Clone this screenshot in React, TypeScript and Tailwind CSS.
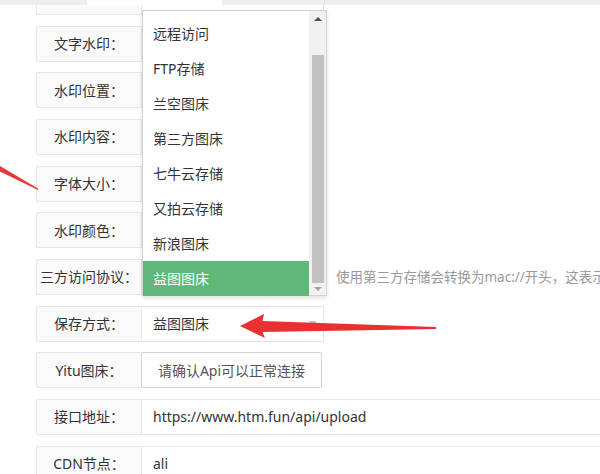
import React from "react";

const font = { fontFamily: '"Noto Sans", "Noto Sans CJK SC", sans-serif' };

function Label({ children }: { children: React.ReactNode }) {
  return (
    <div className="w-[106px] h-full shrink-0 flex items-center justify-center bg-[#fafafa] border border-[#e6e6e6] rounded-l-[2px] text-[14px] text-[#333]">
      {children}
    </div>
  );
}

function Input({ children, wide = false }: { children?: React.ReactNode; wide?: boolean }) {
  return (
    <div
      className={`${wide ? "flex-1 border-r-0" : "w-[183px] shrink-0"} h-full -ml-px flex items-center pl-[11px] bg-white border border-[#e6e6e6] text-[14px] text-[#333] whitespace-nowrap`}
    >
      {children}
    </div>
  );
}

const items = ["远程访问", "FTP存储", "兰空图床", "第三方图床", "七牛云存储", "又拍云存储", "新浪图床", "益图图床"];

export default function App() {
  return (
    <div className="relative w-[600px] h-[474px] overflow-hidden bg-white" style={font}>
      {/* top tab strip */}
      <div className="absolute top-0 left-0 w-[600px] h-[5px] flex z-10">
        <div className="w-[87px] h-full bg-[#eeeeee]" />
        <div className="w-[135px] h-full bg-white" />
        <div className="w-[103px] h-full bg-[#eeeeee] border-r border-[#e2e2e2]" />
        <div className="flex-1 h-full bg-[#eeeeee]" />
      </div>

      <div className="flex flex-col gap-[10.67px] pl-[36px]">
        {/* partial row */}
        <div className="h-[15px] flex">
          <div className="w-[106px] h-full bg-[#fafafa] border border-t-0 border-[#e6e6e6] rounded-bl-[2px]" />
          <div className="w-[183px] h-full -ml-px bg-white border border-t-0 border-[#e6e6e6]" />
        </div>
        <div className="h-[36px] flex">
          <Label>文字水印：</Label>
          <Input />
        </div>
        <div className="h-[36px] flex">
          <Label>水印位置：</Label>
          <Input />
        </div>
        <div className="h-[36px] flex">
          <Label>水印内容：</Label>
          <Input />
        </div>
        <div className="h-[36px] flex">
          <Label>字体大小：</Label>
          <Input />
        </div>
        <div className="h-[36px] flex">
          <Label>水印颜色：</Label>
          <Input />
        </div>
        <div className="h-[36px] flex items-center">
          <Label>三方访问协议：</Label>
          <Input />
          <div className="ml-[12px] shrink-0 text-[13.5px] text-[#999] whitespace-nowrap">使用第三方存储会转换为mac://开头，这表示</div>
        </div>
        <div className="h-[36px] flex relative">
          <Label>保存方式：</Label>
          <Input>益图图床</Input>
          <div className="absolute left-[273px] top-[15px] w-0 h-0 border-l-[4px] border-r-[4px] border-t-[5px] border-l-transparent border-r-transparent border-t-[#c2c2c2]" />
          {/* dropdown */}
          <div className="absolute left-[106px] bottom-[calc(100%+10px)] w-[185px] h-[286px] bg-white border border-[#d2d2d2] shadow-[0_2px_4px_rgba(0,0,0,0.12)] flex z-20">
            <div className="flex-1 flex flex-col pt-[5px]">
              {items.map((t, i) => (
                <div
                  key={t}
                  className={`h-[35px] shrink-0 flex items-center pl-[10px] text-[14px] ${i === items.length - 1 ? "bg-[#5FB878] text-white" : "text-[#333]"}`}
                >
                  {t}
                </div>
              ))}
            </div>
            <div className="w-[17px] h-full bg-[#f1f1f1] flex flex-col items-center">
              <div className="h-[17px] shrink-0 flex items-center justify-center">
                <div className="w-0 h-0 border-l-[4px] border-r-[4px] border-b-[4px] border-l-transparent border-r-transparent border-b-[#505050]" />
              </div>
              <div className="mt-[27px] w-[12px] h-[228px] bg-[#c1c1c1]" />
              <div className="flex-1 flex items-center justify-center">
                <div className="w-0 h-0 border-l-[4px] border-r-[4px] border-t-[4px] border-l-transparent border-r-transparent border-t-[#a3a3a3]" />
              </div>
            </div>
          </div>
        </div>
        <div className="h-[36px] flex">
          <Label>Yitu图床：</Label>
          <div className="w-[181px] shrink-0 h-full -ml-px flex items-center justify-center bg-white border border-[#d2d2d2] rounded-[2px] text-[14px] text-[#555] whitespace-nowrap">
            请确认Api可以正常连接
          </div>
        </div>
        <div className="h-[36px] flex">
          <Label>接口地址：</Label>
          <Input wide>https://www.htm.fun/api/upload</Input>
        </div>
        <div className="h-[36px] flex">
          <Label>CDN节点：</Label>
          <Input wide>ali</Input>
        </div>
      </div>

      {/* red annotation arrows */}
      <svg className="absolute top-0 left-0 z-30 pointer-events-none" width="600" height="474" viewBox="0 0 600 474">
        <polygon points="240,326 264,314 262.5,321 436,327 436,329 262.5,332 265,338" fill="#e92f2f" />
        <polygon points="0,166 38,188.5 38,190 0,171.5" fill="#e53a3a" />
      </svg>
    </div>
  );
}
